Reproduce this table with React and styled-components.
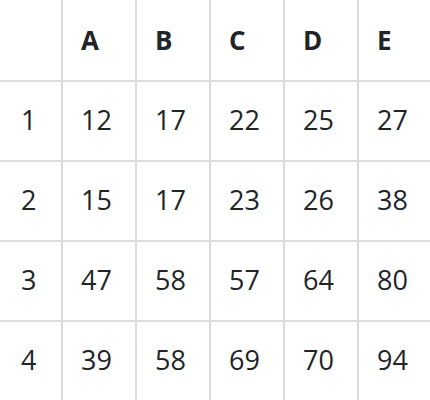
import React from 'react';
import styled, { createGlobalStyle } from 'styled-components';

const GlobalStyle = createGlobalStyle`
html, body {
  margin: 0;
  padding: 0;
  background: #ffffff;
}
body {
  font-family: "Open Sans", "Noto Sans", "Liberation Sans", sans-serif;
  color: #212529;
  overflow: hidden;
}
`

const Table = styled.table`
border-collapse: separate;
border-spacing: 0;
table-layout: fixed;
width: 432px;
`

const HeadCell = styled.th`
box-sizing: border-box;
height: 82px;
width: ${props => props.first ? "63px" : "74px"};
padding: 0 0 0 ${props => props.first ? "21px" : "18px"};
border-right: 2px solid #dcdcdc;
border-bottom: 2px solid #dcdcdc;
text-align: left;
vertical-align: middle;
font-size: 26px;
font-weight: 700;
line-height: 1;
`

const Cell = styled.td`
box-sizing: border-box;
height: 80px;
padding: 0 0 3px ${props => props.first ? "21px" : "18px"};
border-right: 2px solid #dcdcdc;
border-bottom: 2px solid #dcdcdc;
text-align: left;
vertical-align: middle;
font-size: 27px;
font-weight: 400;
line-height: 1;
`

const columns = ["A", "B", "C", "D", "E"];

const rows = [
  [12, 17, 22, 25, 27],
  [15, 17, 23, 26, 38],
  [47, 58, 57, 64, 80],
  [39, 58, 69, 70, 94],
];

function App() {
  return (
    <>
      <GlobalStyle />
      <Table>
        <thead>
          <tr>
            <HeadCell first></HeadCell>
            {columns.map(c => (
              <HeadCell key={c}>{c}</HeadCell>
            ))}
          </tr>
        </thead>
        <tbody>
          {rows.map((row, i) => (
            <tr key={i}>
              <Cell first>{i + 1}</Cell>
              {row.map((v, j) => (
                <Cell key={j}>{v}</Cell>
              ))}
            </tr>
          ))}
        </tbody>
      </Table>
    </>
  );
}

export default App;
